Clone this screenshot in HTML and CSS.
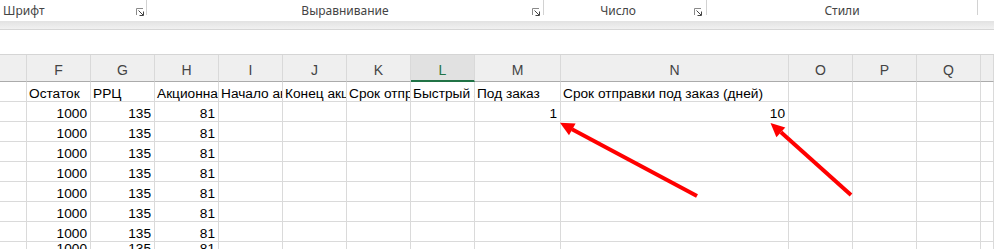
FILE: index.html
```html
<!DOCTYPE html>
<html lang="ru">
<head>
<meta charset="utf-8">
<title>Excel</title>
<link rel="stylesheet" href="styles.css">
</head>
<body>
<div class="page">
  <div class="ribbon">
    <div class="group g1">
      <span class="glabel">Шрифт</span>
      <svg class="launcher" width="8" height="8" viewBox="0 0 8 8"><path d="M0.5 7V0.5H7" stroke="#8a8a8a" fill="none"/><path d="M2.5 2.5L7 7M7.5 3.5V7.5H3.5" stroke="#444" fill="none"/></svg>
    </div>
    <div class="sep"></div>
    <div class="group g2">
      <span class="glabel">Выравнивание</span>
      <svg class="launcher" width="8" height="8" viewBox="0 0 8 8"><path d="M0.5 7V0.5H7" stroke="#8a8a8a" fill="none"/><path d="M2.5 2.5L7 7M7.5 3.5V7.5H3.5" stroke="#444" fill="none"/></svg>
    </div>
    <div class="sep"></div>
    <div class="group g3">
      <span class="glabel">Число</span>
      <svg class="launcher" width="8" height="8" viewBox="0 0 8 8"><path d="M0.5 7V0.5H7" stroke="#8a8a8a" fill="none"/><path d="M2.5 2.5L7 7M7.5 3.5V7.5H3.5" stroke="#444" fill="none"/></svg>
    </div>
    <div class="sep"></div>
    <div class="group g4">
      <span class="glabel">Стили</span>
    </div>
    <div class="sep"></div>
    <div class="group g5"></div>
  </div>
  <div class="band"></div>
  <div class="fbar"></div>

  <div class="sheet">
    <div class="h"></div>
    <div class="h">F</div>
    <div class="h">G</div>
    <div class="h">H</div>
    <div class="h">I</div>
    <div class="h">J</div>
    <div class="h">K</div>
    <div class="h sel">L</div>
    <div class="h">M</div>
    <div class="h">N</div>
    <div class="h">O</div>
    <div class="h">P</div>
    <div class="h">Q</div>
    <div class="h"></div>

    <div class="c"></div>
    <div class="c">Остаток</div>
    <div class="c">РРЦ</div>
    <div class="c">Акционная цена</div>
    <div class="c">Начало акции</div>
    <div class="c">Конец акции</div>
    <div class="c">Срок отправки</div>
    <div class="c">Быстрый заказ</div>
    <div class="c">Под заказ</div>
    <div class="c">Срок отправки под заказ (дней)</div>
    <div class="c"></div><div class="c"></div><div class="c"></div><div class="c"></div>

    <div class="c"></div><div class="c n">1000</div><div class="c n">135</div><div class="c n">81</div><div class="c"></div><div class="c"></div><div class="c"></div><div class="c"></div><div class="c n">1</div><div class="c n">10</div><div class="c"></div><div class="c"></div><div class="c"></div><div class="c"></div>
    <div class="c"></div><div class="c n">1000</div><div class="c n">135</div><div class="c n">81</div><div class="c"></div><div class="c"></div><div class="c"></div><div class="c"></div><div class="c"></div><div class="c"></div><div class="c"></div><div class="c"></div><div class="c"></div><div class="c"></div>
    <div class="c"></div><div class="c n">1000</div><div class="c n">135</div><div class="c n">81</div><div class="c"></div><div class="c"></div><div class="c"></div><div class="c"></div><div class="c"></div><div class="c"></div><div class="c"></div><div class="c"></div><div class="c"></div><div class="c"></div>
    <div class="c"></div><div class="c n">1000</div><div class="c n">135</div><div class="c n">81</div><div class="c"></div><div class="c"></div><div class="c"></div><div class="c"></div><div class="c"></div><div class="c"></div><div class="c"></div><div class="c"></div><div class="c"></div><div class="c"></div>
    <div class="c"></div><div class="c n">1000</div><div class="c n">135</div><div class="c n">81</div><div class="c"></div><div class="c"></div><div class="c"></div><div class="c"></div><div class="c"></div><div class="c"></div><div class="c"></div><div class="c"></div><div class="c"></div><div class="c"></div>
    <div class="c"></div><div class="c n">1000</div><div class="c n">135</div><div class="c n">81</div><div class="c"></div><div class="c"></div><div class="c"></div><div class="c"></div><div class="c"></div><div class="c"></div><div class="c"></div><div class="c"></div><div class="c"></div><div class="c"></div>
    <div class="c"></div><div class="c n">1000</div><div class="c n">135</div><div class="c n">81</div><div class="c"></div><div class="c"></div><div class="c"></div><div class="c"></div><div class="c"></div><div class="c"></div><div class="c"></div><div class="c"></div><div class="c"></div><div class="c"></div>
    <div class="c"></div><div class="c n">1000</div><div class="c n">135</div><div class="c n">81</div><div class="c"></div><div class="c"></div><div class="c"></div><div class="c"></div><div class="c"></div><div class="c"></div><div class="c"></div><div class="c"></div><div class="c"></div><div class="c"></div>
  </div>

  <svg class="arrows" width="994" height="249" viewBox="0 0 994 249">
    <line x1="697" y1="196" x2="572" y2="129.3" stroke="#ff0000" stroke-width="4"/>
    <polygon points="560,122.7 575.6,123.5 569,135.2" fill="#ff0000"/>
    <line x1="851" y1="195" x2="781" y2="132.3" stroke="#ff0000" stroke-width="4"/>
    <polygon points="770.5,123 785.3,127.4 776.4,137.3" fill="#ff0000"/>
  </svg>
</div>
</body>
</html>
```
FILE: styles.css
```css
html, body {
  margin: 0;
  padding: 0;
  background: #ffffff;
}
.page {
  position: relative;
  width: 994px;
  height: 249px;
  overflow: hidden;
}
.ribbon {
  display: flex;
  height: 21px;
  background: #ffffff;
  font-family: "Noto Sans", "Liberation Sans", sans-serif;
  font-size: 12px;
  color: #444444;
}
.group {
  display: grid;
  grid-template-columns: 1fr;
  align-items: center;
  height: 21px;
}
.group > * {
  grid-area: 1 / 1;
}
.glabel {
  justify-self: center;
  line-height: 21px;
}
.launcher {
  justify-self: end;
  align-self: start;
  margin-top: 8px;
}
.g1 { width: 146px; }
.g1 .glabel { justify-self: start; padding-left: 3px; }
.g1 .launcher { margin-right: 2px; }
.g2 { width: 396px; }
.g2 .launcher { margin-right: 3px; }
.g3 { width: 162px; }
.g3 .glabel { padding-right: 14px; }
.g3 .launcher { margin-right: 4px; }
.g4 { width: 270px; }
.g5 { flex: 1; }
.sep {
  width: 1px;
  height: 15px;
  background: #d2d2d2;
}
.band {
  height: 8px;
  background: linear-gradient(#e2e2e2, #f1f1f1);
  border-bottom: 1px solid #d6d6d6;
}
.fbar {
  height: 24px;
  background: #ffffff;
  border-bottom: 1px solid #d5d5d5;
}
.sheet {
  display: grid;
  grid-template-columns: 27px 64px 64px 64px 64px 64px 64px 64px 86px 228px 64px 64px 64px 13px;
  grid-template-rows: 27px repeat(8, 20px);
  font-family: "Liberation Sans", Arial, sans-serif;
  font-size: 13.7px;
}
.h {
  box-sizing: border-box;
  background: #efefef;
  border-right: 1px solid #d9d9d9;
  border-bottom: 1px solid #ababab;
  color: #444444;
  display: flex;
  justify-content: center;
  align-items: flex-end;
  padding-bottom: 4px;
  line-height: 13px;
  font-size: 14px;
}
.h.sel {
  background: #e1e1e1;
  border-bottom: 2px solid #217346;
  color: #217346;
  padding-bottom: 3px;
}
.c {
  box-sizing: border-box;
  border-right: 1px solid #dadada;
  border-bottom: 1px solid #dadada;
  display: flex;
  align-items: flex-end;
  padding: 0 3px 1px 2px;
  line-height: 13px;
  white-space: nowrap;
  overflow: hidden;
  color: #000000;
}
.c.n {
  justify-content: flex-end;
}
.arrows {
  position: absolute;
  left: 0;
  top: 0;
  pointer-events: none;
}
```
